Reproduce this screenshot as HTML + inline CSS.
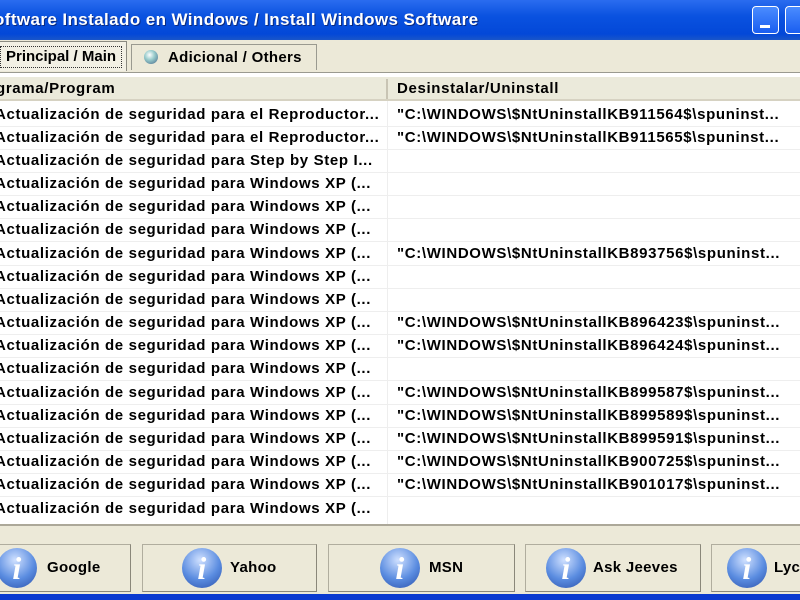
<!DOCTYPE html>
<html><head><meta charset="utf-8"><style>
*{margin:0;padding:0;box-sizing:border-box}
body{width:800px;height:600px;overflow:hidden;background:#ece9d8;font-family:"Liberation Sans",Tahoma,sans-serif;font-weight:bold;font-size:15px;color:#000;position:relative}
.title{position:absolute;left:0;top:0;width:800px;height:40px;background:linear-gradient(#2a6cf0,#0a52e0 40%,#0348d8 85%,#1a55c8);color:#fff;font-size:17px;letter-spacing:0.4px;line-height:40px;text-indent:-6px;text-shadow:1px 1px 0 #0a2a80;white-space:nowrap}
.min{position:absolute;left:752px;top:6px;width:27px;height:28px;border:1px solid #fff;border-radius:4px;background:linear-gradient(#4a8cff,#1a5ef0)}
.min:after{content:"";position:absolute;left:7px;top:18px;width:10px;height:3px;background:#fff}
.max{position:absolute;left:785px;top:6px;width:27px;height:28px;border:1px solid #fff;border-radius:4px;background:linear-gradient(#4a8cff,#1a5ef0)}
.tab1{position:absolute;left:-4px;top:41px;width:131px;height:30px;border:1px solid #8a8a80;border-bottom:none;background:#f2f0e4}
.tab1 span{position:absolute;left:3px;top:4px;border:1px dotted #333;padding:0 5px;line-height:20px}
.tab2{position:absolute;left:131px;top:44px;width:186px;height:26px;border:1px solid #9a9a90;border-bottom:none;background:#ece9d8;line-height:26px;padding-left:36px;letter-spacing:0.3px}
.tab2 i{position:absolute;left:12px;top:5px;width:14px;height:14px;border-radius:50%;background:radial-gradient(circle at 40% 35%,#fff,#9cc 40%,#468 100%)}
.list{position:absolute;left:0;top:72px;width:800px;height:452px;background:#fff;border-top:1px solid #9a9a90;letter-spacing:0.65px}
.hdr{position:absolute;left:0;top:4px;width:800px;height:24px;background:#ebeadb;border-bottom:2px solid #d6d2c2;line-height:24px}
.hdr .c1{position:absolute;left:-4px}
.hdr .c2{position:absolute;left:397px}
.hdr .sep{position:absolute;left:386px;top:2px;width:2px;height:20px;background:#c8c4b4}
.row{position:absolute;left:0;width:800px;height:23px;line-height:22px;border-bottom:1px solid #eeeeee;white-space:nowrap}
.row .a{position:absolute;left:-5px}
.row .b{position:absolute;left:397px}
.vl{position:absolute;left:387px;top:28px;width:1px;height:424px;background:#eeeeee}
.btnbar{position:absolute;left:0;top:524px;width:800px;height:71px;background:#ece9d8;border-top:2px solid #aca899}
.btn{position:absolute;top:18px;height:48px;border:1px solid #b0ad9e;border-right-color:#8a877a;border-bottom-color:#8a877a;background:#ece9d8;line-height:46px;letter-spacing:0.3px}
.btn .ic{position:absolute;top:3px;width:40px;height:40px;border-radius:50%;background:radial-gradient(circle at 45% 30%,#cfe0ff,#5a8ce0 55%,#2a4fa8 100%);color:#fff;font-family:"Liberation Serif",serif;font-style:italic;font-size:32px;line-height:40px;text-align:center}
.btn .t{position:absolute}
.bottom{position:absolute;left:0;top:594px;width:800px;height:6px;background:#0a3ad0}
</style></head><body>
<div class="title">oftware Instalado en Windows / Install Windows Software</div>
<div class="min"></div><div class="max"></div>
<div class="tab2"><i></i>Adicional / Others</div>
<div class="tab1"><span>Principal / Main</span></div>
<div class="list">
<div class="hdr"><span class="c1">grama/Program</span><span class="sep"></span><span class="c2">Desinstalar/Uninstall</span></div>
<div class="vl"></div>
<div class="row" style="top:31px"><span class="a">Actualización de seguridad para el Reproductor...</span><span class="b">"C:\WINDOWS\$NtUninstallKB911564$\spuninst...</span></div>
<div class="row" style="top:54px"><span class="a">Actualización de seguridad para el Reproductor...</span><span class="b">"C:\WINDOWS\$NtUninstallKB911565$\spuninst...</span></div>
<div class="row" style="top:77px"><span class="a">Actualización de seguridad para Step by Step I...</span></div>
<div class="row" style="top:100px"><span class="a">Actualización de seguridad para Windows XP (...</span></div>
<div class="row" style="top:123px"><span class="a">Actualización de seguridad para Windows XP (...</span></div>
<div class="row" style="top:146px"><span class="a">Actualización de seguridad para Windows XP (...</span></div>
<div class="row" style="top:170px"><span class="a">Actualización de seguridad para Windows XP (...</span><span class="b">"C:\WINDOWS\$NtUninstallKB893756$\spuninst...</span></div>
<div class="row" style="top:193px"><span class="a">Actualización de seguridad para Windows XP (...</span></div>
<div class="row" style="top:216px"><span class="a">Actualización de seguridad para Windows XP (...</span></div>
<div class="row" style="top:239px"><span class="a">Actualización de seguridad para Windows XP (...</span><span class="b">"C:\WINDOWS\$NtUninstallKB896423$\spuninst...</span></div>
<div class="row" style="top:262px"><span class="a">Actualización de seguridad para Windows XP (...</span><span class="b">"C:\WINDOWS\$NtUninstallKB896424$\spuninst...</span></div>
<div class="row" style="top:285px"><span class="a">Actualización de seguridad para Windows XP (...</span></div>
<div class="row" style="top:309px"><span class="a">Actualización de seguridad para Windows XP (...</span><span class="b">"C:\WINDOWS\$NtUninstallKB899587$\spuninst...</span></div>
<div class="row" style="top:332px"><span class="a">Actualización de seguridad para Windows XP (...</span><span class="b">"C:\WINDOWS\$NtUninstallKB899589$\spuninst...</span></div>
<div class="row" style="top:355px"><span class="a">Actualización de seguridad para Windows XP (...</span><span class="b">"C:\WINDOWS\$NtUninstallKB899591$\spuninst...</span></div>
<div class="row" style="top:378px"><span class="a">Actualización de seguridad para Windows XP (...</span><span class="b">"C:\WINDOWS\$NtUninstallKB900725$\spuninst...</span></div>
<div class="row" style="top:401px"><span class="a">Actualización de seguridad para Windows XP (...</span><span class="b">"C:\WINDOWS\$NtUninstallKB901017$\spuninst...</span></div>
<div class="row" style="top:425px;border-bottom:none"><span class="a">Actualización de seguridad para Windows XP (...</span></div>
</div>
<div class="btnbar">
<div class="btn" style="left:-4px;width:135px"><span class="ic" style="left:0">i</span><span class="t" style="left:50px">Google</span></div>
<div class="btn" style="left:142px;width:175px"><span class="ic" style="left:39px">i</span><span class="t" style="left:87px">Yahoo</span></div>
<div class="btn" style="left:328px;width:187px"><span class="ic" style="left:51px">i</span><span class="t" style="left:100px">MSN</span></div>
<div class="btn" style="left:525px;width:176px"><span class="ic" style="left:20px">i</span><span class="t" style="left:67px">Ask Jeeves</span></div>
<div class="btn" style="left:711px;width:100px"><span class="ic" style="left:15px">i</span><span class="t" style="left:62px">Lycos</span></div>
</div>
<div class="bottom"></div>
</body></html>
